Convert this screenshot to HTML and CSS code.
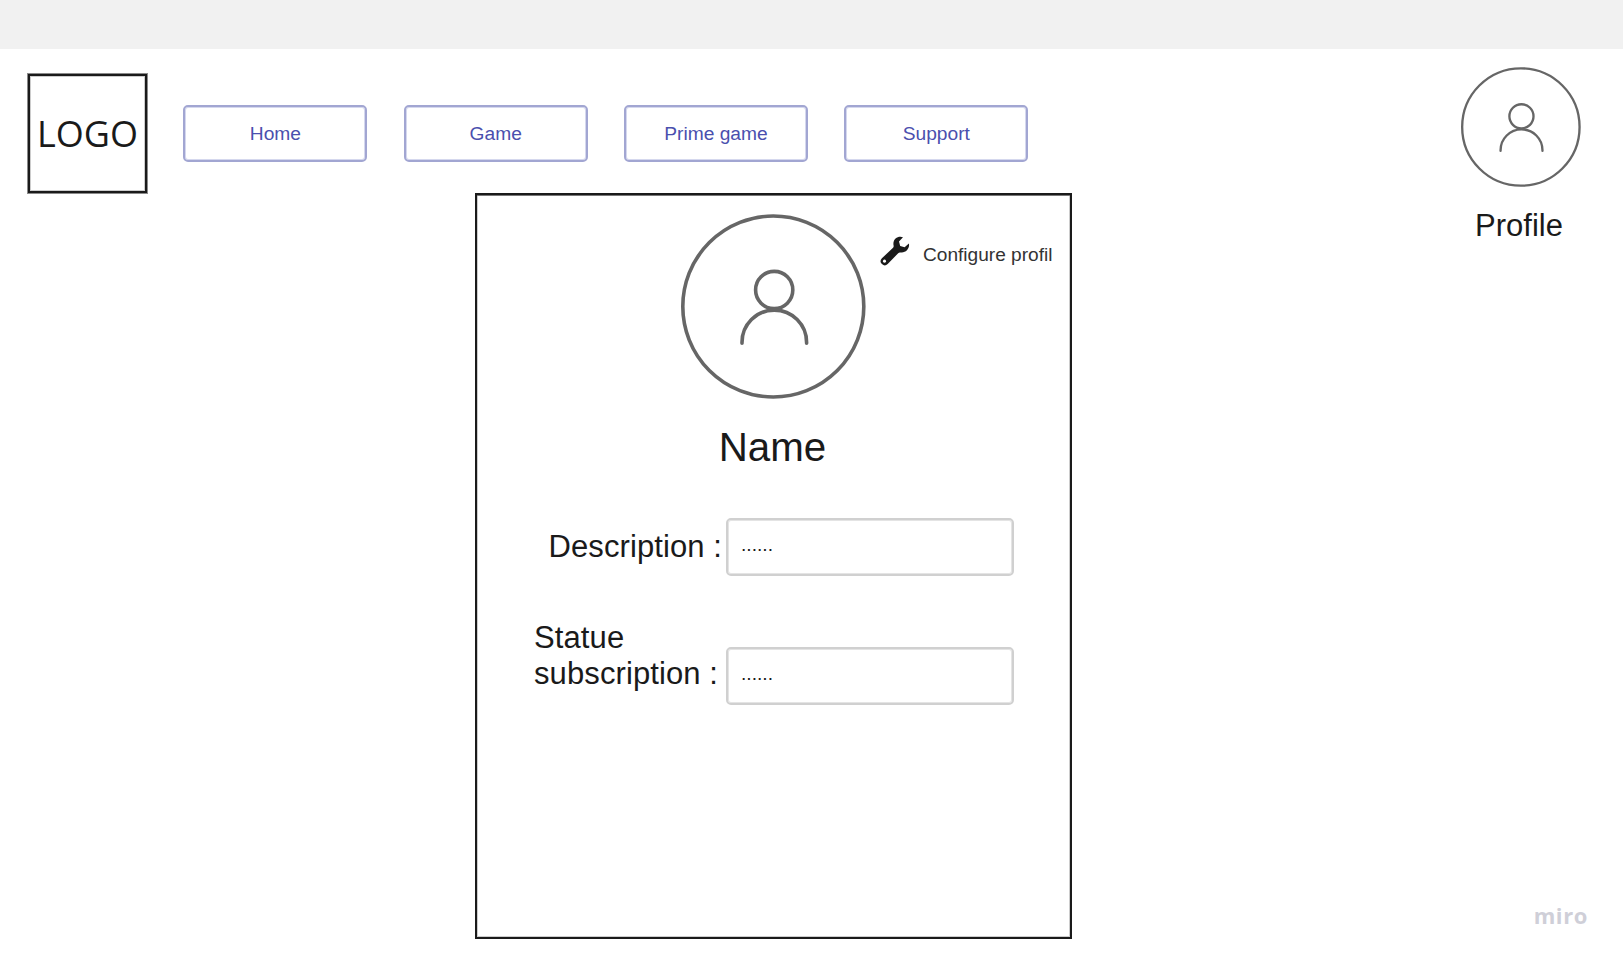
FILE: index.html
```html
<!DOCTYPE html>
<html lang="en">
<head>
<meta charset="utf-8">
<title>Profile</title>
<link rel="stylesheet" href="styles.css">
</head>
<body>
<svg class="defs" aria-hidden="true">
  <symbol id="avatar" viewBox="0 0 185 185">
    <g fill="none" stroke="#666" stroke-width="3.6" stroke-linecap="round">
      <circle cx="92.3" cy="92.5" r="90.5"/>
      <circle cx="93.2" cy="76" r="18.6"/>
      <path d="M61 129.200v-.8a32.300 32.300 0 0 1 64.600 0v.8"/>
    </g>
  </symbol>
</svg>
<div class="topbar"></div>
<header class="header">
  <div class="logo">LOGO</div>
  <nav class="nav">
    <a class="nav-item">Home</a>
    <a class="nav-item">Game</a>
    <a class="nav-item">Prime game</a>
    <a class="nav-item">Support</a>
  </nav>
  <div class="account">
    <svg class="account-avatar"><use href="#avatar"/></svg>
    <span class="account-label">Profile</span>
  </div>
</header>
<main class="panel">
  <div class="panel-head">
    <svg class="panel-avatar"><use href="#avatar"/></svg>
    <div class="configure">
      <svg class="wrench" viewBox="0 0 30 30">
        <path fill="#1a1a1a" fill-rule="evenodd" d="M23 1.200C18.500-.800 12.200 2.800 13.600 9.500C13.800 10.700 13.500 11.200 12.800 11.900L1.900 22.300A4 4 0 0 0 7.700 28L18.200 17.200C18.900 16.500 19.600 16.300 20.600 16.500C25.800 17.300 30 12.500 28.900 7.500L24.600 11.300L20.200 10.100L19 5.400ZM4.500 23.600A1.600 1.600 0 1 1 4.490 23.600Z"/>
      </svg>
      <span class="configure-label">Configure profil</span>
    </div>
  </div>
  <h1 class="name">Name</h1>
  <div class="field">
    <label class="label label-single">Description :</label>
    <div class="input">......</div>
  </div>
  <div class="field field-status">
    <label class="label">Statue<br>subscription :</label>
    <div class="input">......</div>
  </div>
</main>
<footer class="brand">miro</footer>
</body>
</html>
```
FILE: styles.css
```css
* { box-sizing: border-box; }
body {
  margin: 0;
  height: 962px;
  overflow: hidden;
  position: relative;
  background: #fff;
  color: #1a1a1a;
  font-family: "Liberation Sans", Arial, sans-serif;
}
.defs { position: absolute; width: 0; height: 0; }
.topbar { height: 49px; background: #f1f1f1; }
.header {
  display: flex;
  align-items: flex-start;
  height: 144px;
  padding: 18px 42px 0 28px;
}
.logo {
  width: 119px;
  height: 119px;
  margin-top: 7px;
  display: flex;
  align-items: center;
  justify-content: center;
  border: 2px solid #1a1a1a;
  box-shadow: 0 0 0 1px #8a8a8a, inset 0 0 0 1px #ccc;
  font: 36px/1 "Open Sans", sans-serif;
}
.nav { display: flex; gap: 36.3px; margin: 38px 0 0 36.4px; }
.nav-item {
  width: 184px;
  height: 57px;
  border: 2px solid #a2a6d2;
  border-radius: 5px;
  box-shadow: inset 0 0 0 1px #d5d8ee;
  color: #4a4fae;
  font-size: 19.2px;
  line-height: 53px;
  text-align: center;
}
.account {
  margin-left: auto;
  display: flex;
  flex-direction: column;
  align-items: center;
}
.account-avatar { width: 120px; height: 120px; }
.account-label { margin: 21px 4px 0 0; font-size: 31px; line-height: 36px; }
.panel {
  width: 597px;
  height: 746px;
  margin-left: 475px;
  border: 2px solid #1a1a1a;
  box-shadow: inset 0 1px #777, inset 0 0 0 1px #ccc;
}
.panel-head { display: flex; padding: 19px 0 0 204px; }
.panel-avatar { width: 185px; height: 185px; flex: none; }
.configure { display: flex; margin: 22px 0 0 13.6px; }
.wrench { width: 30px; height: 30px; }
.configure-label {
  margin: 8px 0 0 13.4px;
  font-size: 19.1px;
  line-height: 22px;
  color: #333;
  white-space: nowrap;
}
.name {
  margin: 25px 2px 0 0;
  font-size: 40.3px;
  font-weight: 400;
  line-height: 47px;
  text-align: center;
}
.field { display: flex; margin: 47px 0 0 57px; }
.field-status { margin-top: 43px; }
.label {
  width: 192px;
  font-size: 31px;
  line-height: 36.3px;
  letter-spacing: 0.1px;
  white-space: nowrap;
}
.label-single { padding: 11px 0 0 14.5px; }
.field-status .label { padding-top: 2px; }
.input {
  width: 288px;
  height: 58px;
  border: 2px solid #d0d0d0;
  border-radius: 5px;
  box-shadow: inset 0 0 0 1px #e4e4e4;
  padding-left: 13px;
  font-size: 19.2px;
  line-height: 50px;
}
.field-status { margin-top: 42px; }
.field-status .input { margin-top: 29px; }
.brand {
  position: absolute;
  right: 35px;
  bottom: 33px;
  font-family: "Open Sans", sans-serif;
  font-size: 22px;
  font-weight: 700;
  line-height: 28px;
  letter-spacing: 0.6px;
  color: #cfcfd8;
}
```
